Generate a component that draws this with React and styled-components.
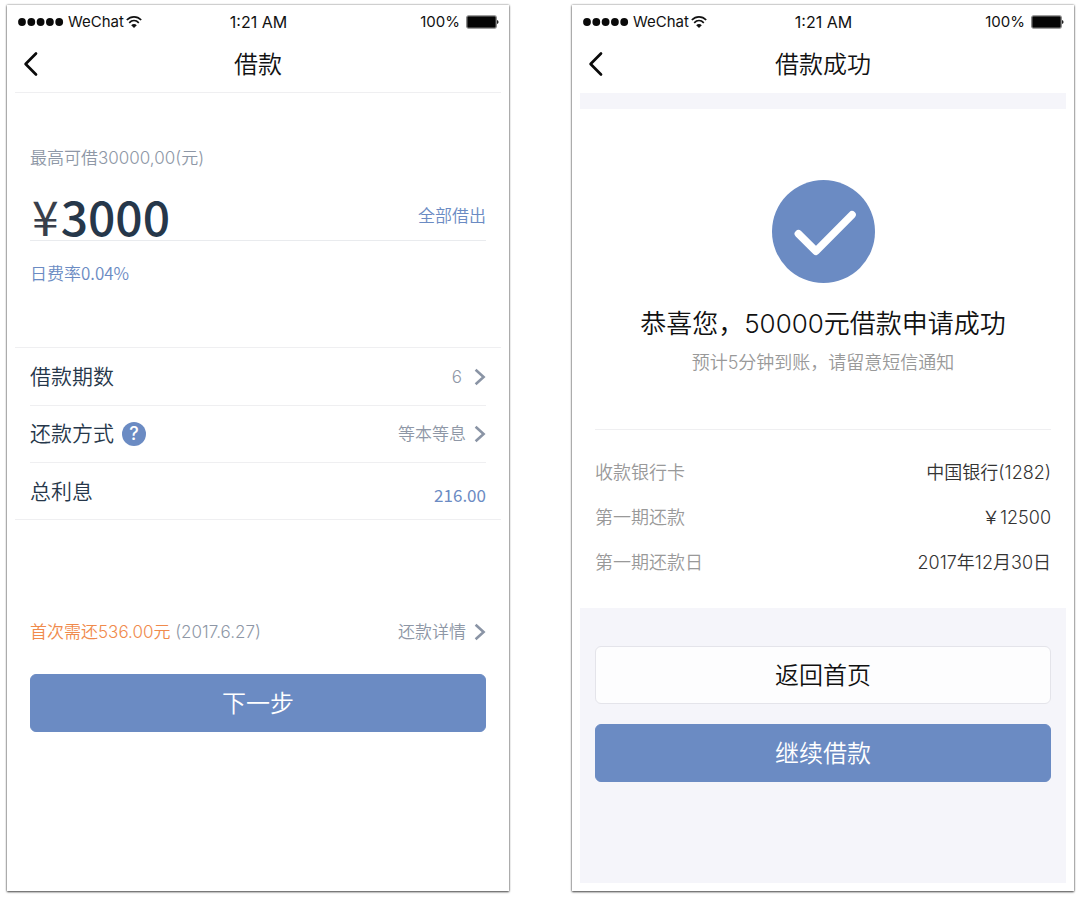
import React, { useState } from "react";
import styled, { createGlobalStyle, css } from "styled-components";

const BLUE = "#6b8bc3";
const MUTED = "#8e97a6";
const CJK = `"Noto Sans CJK SC", sans-serif`;

const GlobalStyle = createGlobalStyle`
  *, *::before, *::after { box-sizing: border-box; }
  body { margin: 0; background: #fff; font-family: Inter, ${CJK}; font-weight: 350; }
  button, input { font: inherit; color: inherit; margin: 0; padding: 0; border: 0; background: none; }
  button { cursor: pointer; }
  h1, h2, p, dl, dd, dt { margin: 0; font-weight: inherit; }
`;

const Page = styled.main`
  display: grid;
  grid-template-columns: 1fr 1fr;
  gap: 63px;
  min-height: 100vh;
  padding: 5px 6px 9px 7px;
`;

const Phone = styled.section`
  display: flex;
  flex-direction: column;
  min-width: 0;
  padding-bottom: 8px;
  background: #fff;
  box-shadow: 0 0 2px rgba(0, 0, 0, 0.45), 0 1px 2px rgba(0, 0, 0, 0.65);
`;

const StatusBar = styled.div`
  display: grid;
  grid-template-columns: 1fr auto 1fr;
  align-items: center;
  height: 33px;
  padding: 0 10px 0 11px;
  font-size: 16px;
  font-weight: 400;
  color: #111;
`;

const StatusSide = styled.div`
  display: flex;
  align-items: center;
  justify-content: ${(p) => (p.$end ? "flex-end" : "flex-start")};
  gap: ${(p) => (p.$end ? 6 : 4)}px;
  font-size: 15px;
`;

const Carrier = styled.span`
  margin-right: -2px;
`;

const NavBar = styled.header`
  display: grid;
  grid-template-columns: 40px 1fr 40px;
  align-items: center;
  height: 55px;
  margin: 0 8px;
  border-bottom: 1px solid ${(p) => (p.$line ? "#efeff1" : "transparent")};
`;

const BackButton = styled.button`
  display: flex;
  padding: 7px 8px 9px;
`;

const NavTitle = styled.h1`
  font-size: 24px;
  line-height: 32px;
  text-align: center;
  color: #111;
`;

const LoanForm = styled.div`
  padding: 53px 23px 0;
`;

const Note = styled.p`
  font-size: 17px;
  line-height: 24px;
  color: ${(p) => (p.$accent ? BLUE : MUTED)};
  ${(p) => p.$accent && css`font-family: ${CJK};`}
`;

const AmountRow = styled.div`
  display: flex;
  align-items: center;
  gap: 2px;
  height: 51px;
  margin: 20px 0;
  padding-left: 2px;
  border-bottom: 1px solid #e9ebee;
  font-family: ${CJK};
`;

const AmountLabel = styled.label`
  font-size: 48px;
  line-height: 50px;
  font-weight: 400;
  color: #3a3f4b;
`;

const AmountInput = styled.input`
  flex: 1;
  min-width: 0;
  height: 50px;
  font-size: 48px;
  line-height: 50px;
  font-weight: 500;
  color: #26374a;
  outline: none;
`;

const TextButton = styled.button`
  font-size: 17px;
  line-height: 24px;
  color: ${BLUE};
`;

const OptionList = styled.div`
  margin: 62px 8px 0;
  border-top: 1px solid #efeff1;
  border-bottom: 1px solid #efeff1;
`;

const OptionRow = styled.div`
  display: flex;
  align-items: ${(p) => (p.$low ? "flex-end" : "center")};
  justify-content: space-between;
  height: 57px;
  margin: 0 15px;
  padding: ${(p) => (p.$low ? "0 0 12px" : 0)};
  & + & { border-top: 1px solid #efeff1; }
`;

const OptionName = styled.span`
  display: flex;
  align-items: center;
  gap: 8px;
  font-size: 21px;
  line-height: 30px;
  color: #26374a;
`;

const HelpButton = styled.button`
  width: 24px;
  height: 24px;
  border-radius: 50%;
  background: ${BLUE};
  color: #fff;
  font-size: 18px;
  font-weight: 500;
  line-height: 24px;
  text-align: center;
`;

const OptionValue = styled.button`
  display: flex;
  align-items: center;
  gap: ${(p) => (p.$wide ? 12 : 8)}px;
  font-size: 17px;
  line-height: 24px;
  color: ${MUTED};
`;

const Interest = styled.span`
  font-family: ${CJK};
  font-size: 17px;
  line-height: 24px;
  font-weight: 400;
  color: ${BLUE};
`;

const RepayRow = styled.div`
  display: flex;
  align-items: center;
  justify-content: space-between;
  margin: 100px 23px 30px;
`;

const FirstDue = styled.span`
  color: #f08a4b;
`;

const Button = styled.button`
  display: block;
  height: 58px;
  padding-top: 2px;
  border-radius: 6px;
  border: 1px solid ${(p) => (p.$plain ? "#e4e4ea" : BLUE)};
  background: ${(p) => (p.$plain ? "#fdfdfe" : BLUE)};
  color: ${(p) => (p.$plain ? "#111" : "#fff")};
  font-size: 24px;
  line-height: 32px;
`;

const FormAction = styled.div`
  display: grid;
  padding: 0 23px;
`;

const Band = styled.div`
  height: 16px;
  margin: 0 8px;
  background: #f5f5fa;
`;

const Result = styled.div`
  display: flex;
  flex-direction: column;
  align-items: center;
  margin: 0 23px;
  padding: 71px 0 54px;
  border-bottom: 1px solid #efeff1;
`;

const ResultTitle = styled.h2`
  margin-top: 23px;
  font-size: 26px;
  line-height: 36px;
  color: #111;
`;

const ResultNote = styled.p`
  margin-top: 9px;
  font-size: 18px;
  line-height: 24px;
  color: #999;
`;

const Details = styled.dl`
  margin: 0 23px;
  padding: 20px 0 23px;
  font-size: 18px;
  line-height: 45px;
`;

const Detail = styled.div`
  display: flex;
  justify-content: space-between;
`;

const Term = styled.dt`
  color: #999;
`;

const Desc = styled.dd`
  color: #333;
`;

const Footer = styled.div`
  flex: 1;
  display: grid;
  align-content: start;
  gap: 20px;
  margin: 0 8px;
  padding: 38px 15px;
  background: #f5f5fa;
`;

const SignalDots = () => (
  <svg width="46" height="10" viewBox="0 0 46 10" aria-hidden="true">
    {[4, 13.3, 22.6, 31.9, 41.2].map((x) => (
      <circle key={x} cx={x} cy="5" r="3.9" fill="#0a0a0a" />
    ))}
  </svg>
);

const Wifi = () => (
  <svg width="16" height="14" viewBox="0 0 16 14" fill="none" stroke="#111" strokeWidth="1.7" aria-hidden="true">
    <path d="M0.8 5C5 0.8 11 0.8 15.2 5" />
    <path d="M3.2 7.8C6 5 10 5 12.8 7.8" />
    <path d="M5.2 10.2C6.8 8.6 9.2 8.6 10.8 10.2L8 13Z" fill="#111" stroke="none" />
  </svg>
);

const Battery = () => (
  <svg width="33" height="14" viewBox="0 0 33 14" aria-hidden="true">
    <rect x="0.8" y="0.9" width="29.4" height="12.2" rx="1.6" fill="#050505" stroke="#808080" strokeWidth="1.3" />
    <path d="M31 5Q32.6 5.4 32.6 7Q32.6 8.6 31 9Z" fill="#222" />
  </svg>
);

const BackIcon = () => (
  <svg width="16" height="26" viewBox="0 0 16 26" fill="none" stroke="#0a0a0a" strokeWidth="2.7" strokeLinecap="round" strokeLinejoin="round" aria-hidden="true">
    <path d="M13 2.5L2.6 13L13 23.5" />
  </svg>
);

const Chevron = () => (
  <svg width="12" height="18" viewBox="0 0 12 18" fill="none" stroke="#8a94a5" strokeWidth="2.6" aria-hidden="true">
    <path d="M1.6 1.8L9.6 9L1.6 16.2" />
  </svg>
);

const SuccessIcon = () => (
  <svg width="103" height="103" viewBox="0 0 103 103" fill="none" role="img" aria-label="成功">
    <circle cx="51.5" cy="51.5" r="51.5" fill={BLUE} />
    <path d="M26.4 53.8L44 71.2L80 34.8" stroke="#fff" strokeWidth="7.6" strokeLinecap="round" strokeLinejoin="round" />
  </svg>
);

function PhoneTop({ title, line }) {
  return (
    <>
      <StatusBar>
        <StatusSide>
          <SignalDots />
          <Carrier>WeChat</Carrier>
          <Wifi />
        </StatusSide>
        <span>1:21 AM</span>
        <StatusSide $end>
          <span>100%</span>
          <Battery />
        </StatusSide>
      </StatusBar>
      <NavBar $line={line}>
        <BackButton type="button" aria-label="返回">
          <BackIcon />
        </BackButton>
        <NavTitle>{title}</NavTitle>
      </NavBar>
    </>
  );
}

const details = [
  ["收款银行卡", "中国银行(1282)"],
  ["第一期还款", "￥12500"],
  ["第一期还款日", "2017年12月30日"],
];

export default function App() {
  const [amount, setAmount] = useState("3000");
  return (
    <>
      <GlobalStyle />
      <Page>
        <Phone>
          <PhoneTop title="借款" line />
          <LoanForm>
            <Note>最高可借30000,00(元)</Note>
            <AmountRow>
              <AmountLabel htmlFor="amount">¥</AmountLabel>
              <AmountInput id="amount" value={amount} onChange={(e) => setAmount(e.target.value)} />
              <TextButton type="button" onClick={() => setAmount("30000")}>全部借出</TextButton>
            </AmountRow>
            <Note $accent>日费率0.04%</Note>
          </LoanForm>
          <OptionList>
            <OptionRow>
              <OptionName>借款期数</OptionName>
              <OptionValue type="button" $wide>6<Chevron /></OptionValue>
            </OptionRow>
            <OptionRow>
              <OptionName>
                还款方式
                <HelpButton type="button">?</HelpButton>
              </OptionName>
              <OptionValue type="button">等本等息<Chevron /></OptionValue>
            </OptionRow>
            <OptionRow $low>
              <OptionName>总利息</OptionName>
              <Interest>216.00</Interest>
            </OptionRow>
          </OptionList>
          <RepayRow>
            <Note><FirstDue>首次需还536.00元</FirstDue> (2017.6.27)</Note>
            <OptionValue type="button">还款详情<Chevron /></OptionValue>
          </RepayRow>
          <FormAction>
            <Button type="button">下一步</Button>
          </FormAction>
        </Phone>

        <Phone>
          <PhoneTop title="借款成功" />
          <Band />
          <Result>
            <SuccessIcon />
            <ResultTitle>恭喜您，50000元借款申请成功</ResultTitle>
            <ResultNote>预计5分钟到账，请留意短信通知</ResultNote>
          </Result>
          <Details>
            {details.map(([term, desc]) => (
              <Detail key={term}>
                <Term>{term}</Term>
                <Desc>{desc}</Desc>
              </Detail>
            ))}
          </Details>
          <Footer>
            <Button type="button" $plain>返回首页</Button>
            <Button type="button">继续借款</Button>
          </Footer>
        </Phone>
      </Page>
    </>
  );
}
